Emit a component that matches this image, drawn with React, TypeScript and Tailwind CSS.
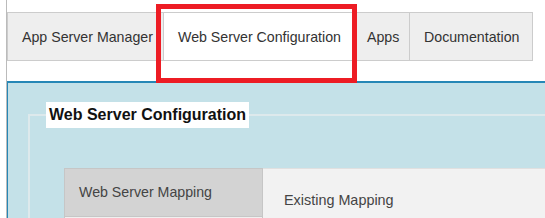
import React from "react";

const tabs = [
    { label: "App Server Manager", active: false, width: "w-[157px]" },
    { label: "Web Server Configuration", active: true, width: "w-[190px]" },
    { label: "Apps", active: false, width: "w-[58px]" },
    { label: "Documentation", active: false, width: "w-[124px]" },
];

export default function App() {
    return (
        <div className="relative w-[545px] h-[218px] overflow-hidden bg-white text-[#333] font-['Liberation_Sans',Arial,sans-serif]">
            <div className="ml-[6px] h-full border-l border-[#bbbbbb] flex flex-col">
                {/* tab strip */}
                <div className="flex items-start pt-[12px]">
                    {tabs.map((tab, i) => (
                        <div
                            key={tab.label}
                            className={`${tab.width} shrink-0 h-[49px] flex items-center pl-[14px] text-[14.2px] whitespace-nowrap border border-[#cccccc] ${
                                i > 0 ? "-ml-px" : ""
                            } ${tab.active ? "bg-white" : "bg-[#eeeeee]"}`}
                        >
                            <span className="pt-[2px]">{tab.label}</span>
                        </div>
                    ))}
                </div>

                {/* content panel */}
                <div className="mt-[20px] flex-1 border-t-2 border-l border-[#2687b6] bg-[#c4e1e8] pl-[20px] pt-[31px]">
                    <div className="border-t-2 border-l-2 border-[#dde9ec] h-[200px]">
                        <div className="block w-fit -mt-[14px] ml-[16px] bg-white px-[3px] h-[26px] leading-[26px] text-[16px] font-bold text-[#111]">
                            Web Server Configuration
                        </div>

                        <div className="mt-[40px] ml-[34px] flex">
                            <div className="w-[199px] flex flex-col">
                                <div className="h-[49px] border border-[#c6c6c6] bg-[#d3d3d3] flex items-center pl-[14px] text-[14.2px] text-[#444]">
                                    Web Server Mapping
                                </div>
                                <div className="h-[40px] border-x border-[#c6c6c6] bg-[#f0f0f0]" />
                            </div>
                            <div className="flex-1 bg-[#f2f2f2] border-t border-[#e0e0e0] pl-[21px] pt-[23px] text-[14.4px] text-[#444] leading-[16px]">
                                Existing Mapping
                            </div>
                        </div>
                    </div>
                </div>
            </div>

            {/* highlight box drawn over the active tab */}
            <div className="absolute left-[156px] top-[4px] w-[201px] h-[79px] border-[5px] border-[#ed1c24]" />
        </div>
    );
}
